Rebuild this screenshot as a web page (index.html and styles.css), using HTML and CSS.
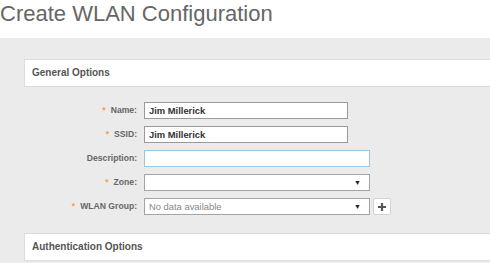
FILE: index.html
```html
<!DOCTYPE html>
<html lang="en">
<head>
  <meta charset="UTF-8" />
  <title>Create WLAN Configuration</title>
  <link rel="stylesheet" href="styles.css">
</head>
<body>
  <h1 class="titulo">Create WLAN Configuration</h1>

  <div class="area">
    <div class="painel">General Options</div>

    <form class="formulario" onsubmit="event.preventDefault();">
      <label class="rotulo" for="nome"><span class="obrig">*</span>Name:</label>
      <div class="campo"><input class="entrada curta" type="text" id="nome" value="Jim Millerick" /></div>

      <label class="rotulo" for="ssid"><span class="obrig">*</span>SSID:</label>
      <div class="campo"><input class="entrada curta" type="text" id="ssid" value="Jim Millerick" /></div>

      <label class="rotulo" for="descricao">Description:</label>
      <div class="campo"><input class="entrada longa foco" type="text" id="descricao" /></div>

      <label class="rotulo" for="zona"><span class="obrig">*</span>Zone:</label>
      <div class="campo">
        <div class="selecao longa" id="zona"><span class="texto"></span><span class="seta">&#9660;</span></div>
      </div>

      <label class="rotulo" for="grupo"><span class="obrig">*</span>WLAN Group:</label>
      <div class="campo">
        <div class="selecao longa" id="grupo"><span class="texto vazio">No data available</span><span class="seta">&#9660;</span></div>
        <button type="button" class="mais">
          <svg width="10" height="10" viewBox="0 0 10 10"><path d="M5 1v8M1 5h8" stroke="#555" stroke-width="2.2"/></svg>
        </button>
      </div>
    </form>

    <div class="painel">Authentication Options</div>
  </div>
</body>
</html>
```

FILE: styles.css
```css
body {
  margin: 0;
  font-family: "Liberation Sans", Arial, sans-serif;
  background: white;
  overflow: hidden;
}

.titulo {
  margin: 0;
  padding: 0 0 10px 0;
  font-size: 22px;
  line-height: 28px;
  font-weight: normal;
  color: #666;
}

.area {
  background: #ebebeb;
  padding: 21px 0 10px 24px;
  overflow: hidden;
}

.painel {
  background: white;
  border: 1px solid #dcdcdc;
  border-right: none;
  height: 26px;
  line-height: 26px;
  padding-left: 7px;
  font-size: 10px;
  font-weight: bold;
  color: #555;
}

.formulario {
  display: grid;
  grid-template-columns: 113px 1fr;
  column-gap: 7px;
  row-gap: 7px;
  margin: 15px 0 18px 0;
}

.rotulo {
  text-align: right;
  font-size: 8.6px;
  font-weight: bold;
  color: #666;
  line-height: 17px;
}

.obrig {
  color: #f0a14c;
  margin-right: 5px;
}

.campo {
  display: flex;
  gap: 3px;
  height: 17px;
}

.entrada {
  box-sizing: border-box;
  height: 17px;
  border: 1px solid #9a9a9a;
  background: white;
  padding: 0 4px;
  font-family: "Liberation Sans", Arial, sans-serif;
  font-size: 9.4px;
  font-weight: bold;
  color: #333;
  outline: none;
}

.curta {
  width: 204px;
}

.longa {
  width: 226px;
}

.foco {
  border-color: #9cc6df;
}

.selecao {
  box-sizing: border-box;
  height: 17px;
  border: 1px solid #a4a4a4;
  background: white;
  display: flex;
  align-items: center;
  justify-content: space-between;
  padding: 0 8px 0 4px;
}

.texto {
  font-size: 9.4px;
  color: #333;
}

.vazio {
  color: #888;
}

.seta {
  font-size: 7px;
  color: #222;
}

.mais {
  box-sizing: border-box;
  width: 18px;
  height: 17px;
  padding: 0;
  border: 1px solid #d4d4d4;
  border-radius: 2px;
  background: white;
  display: flex;
  align-items: center;
  justify-content: center;
}
```
